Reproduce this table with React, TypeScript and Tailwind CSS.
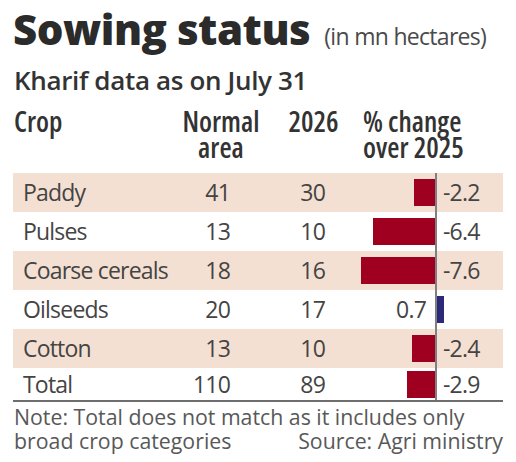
const rows = [
  { crop: "Paddy", normal: "41", now: "30", change: -2.2, shade: true },
  { crop: "Pulses", normal: "13", now: "10", change: -6.4, shade: false },
  { crop: "Coarse cereals", normal: "18", now: "16", change: -7.6, shade: true },
  { crop: "Oilseeds", normal: "20", now: "17", change: 0.7, shade: false },
  { crop: "Cotton", normal: "13", now: "10", change: -2.4, shade: true },
  { crop: "Total", normal: "110", now: "89", change: -2.9, shade: false },
];

const PX_PER_UNIT = 9.7;

function ChangeCell({ value }: { value: number }) {
  const w = Math.round(Math.abs(value) * PX_PER_UNIT);
  const neg = value < 0;
  return (
    <div className="flex h-full w-[177px] items-center">
      <div className="flex h-full w-[110px] items-center justify-end">
        {neg ? (
          <div className="h-[27px] bg-[#a0001f]" style={{ width: w }} />
        ) : (
          <span className="mr-[9px]">{value.toFixed(1)}</span>
        )}
      </div>
      <div className="h-full w-[2px] bg-[#808080]" />
      <div className="flex h-full flex-1 items-center">
        {neg ? (
          <span className="ml-[6px]">{value.toFixed(1)}</span>
        ) : (
          <div className="h-[27px] bg-[#2c2a78]" style={{ width: w }} />
        )}
      </div>
    </div>
  );
}

export default function App() {
  return (
    <div className="h-[462px] w-[516px] bg-white px-[13px] font-['Open_Sans',sans-serif]">
      <div className="flex items-baseline pt-[3px]">
        <h1 className="text-[42px] font-extrabold leading-[52px] tracking-[-0.5px] text-[#2b2b2b]">
          Sowing status
        </h1>
        <span className="ml-[14px] text-[23px] tracking-[-0.7px] text-[#4a4a4a]">
          (in mn hectares)
        </span>
      </div>
      <div className="mt-[10px] pl-[1px] text-[26px] font-semibold leading-[30px] tracking-[-0.35px] text-[#333]">
        Kharif data as on July 31
      </div>

      <div className="mt-[13px] flex text-[28px] font-semibold leading-[26px] text-[#333] font-stretch-condensed">
        <div className="w-[160px] pl-[1px]">Crop</div>
        <div className="w-[96px] text-center">
          Normal
          <br />
          area
        </div>
        <div className="w-[89px] text-center">2026</div>
        <div className="ml-[5px] text-left">
          % change
          <br />
          over 2025
        </div>
      </div>

      <div className="mt-[13px] text-[23px] tracking-[-0.8px] text-[#444]">
        {rows.map((r, i) => (
          <div
            key={r.crop}
            className={`flex items-center ${i === rows.length - 1 ? "h-[32px]" : "h-[39px]"} ${r.shade ? "bg-[#f4e0d2]" : ""}`}
          >
            <div className="w-[160px] whitespace-nowrap pl-[10px]">{r.crop}</div>
            <div className="w-[57px] text-right">{r.normal}</div>
            <div className="w-[95px] text-right">{r.now}</div>
            <ChangeCell value={r.change} />
          </div>
        ))}
      </div>
      <div className="h-[2px] bg-[#6e6e6e]" />

      <div className="mt-[3px] pl-[1px] text-[21.3px] leading-[24px] text-[#585858]">
        <div>Note: Total does not match as it includes only</div>
        <div className="flex justify-between">
          <span>broad crop categories</span>
          <span>Source: Agri ministry</span>
        </div>
      </div>
    </div>
  );
}
